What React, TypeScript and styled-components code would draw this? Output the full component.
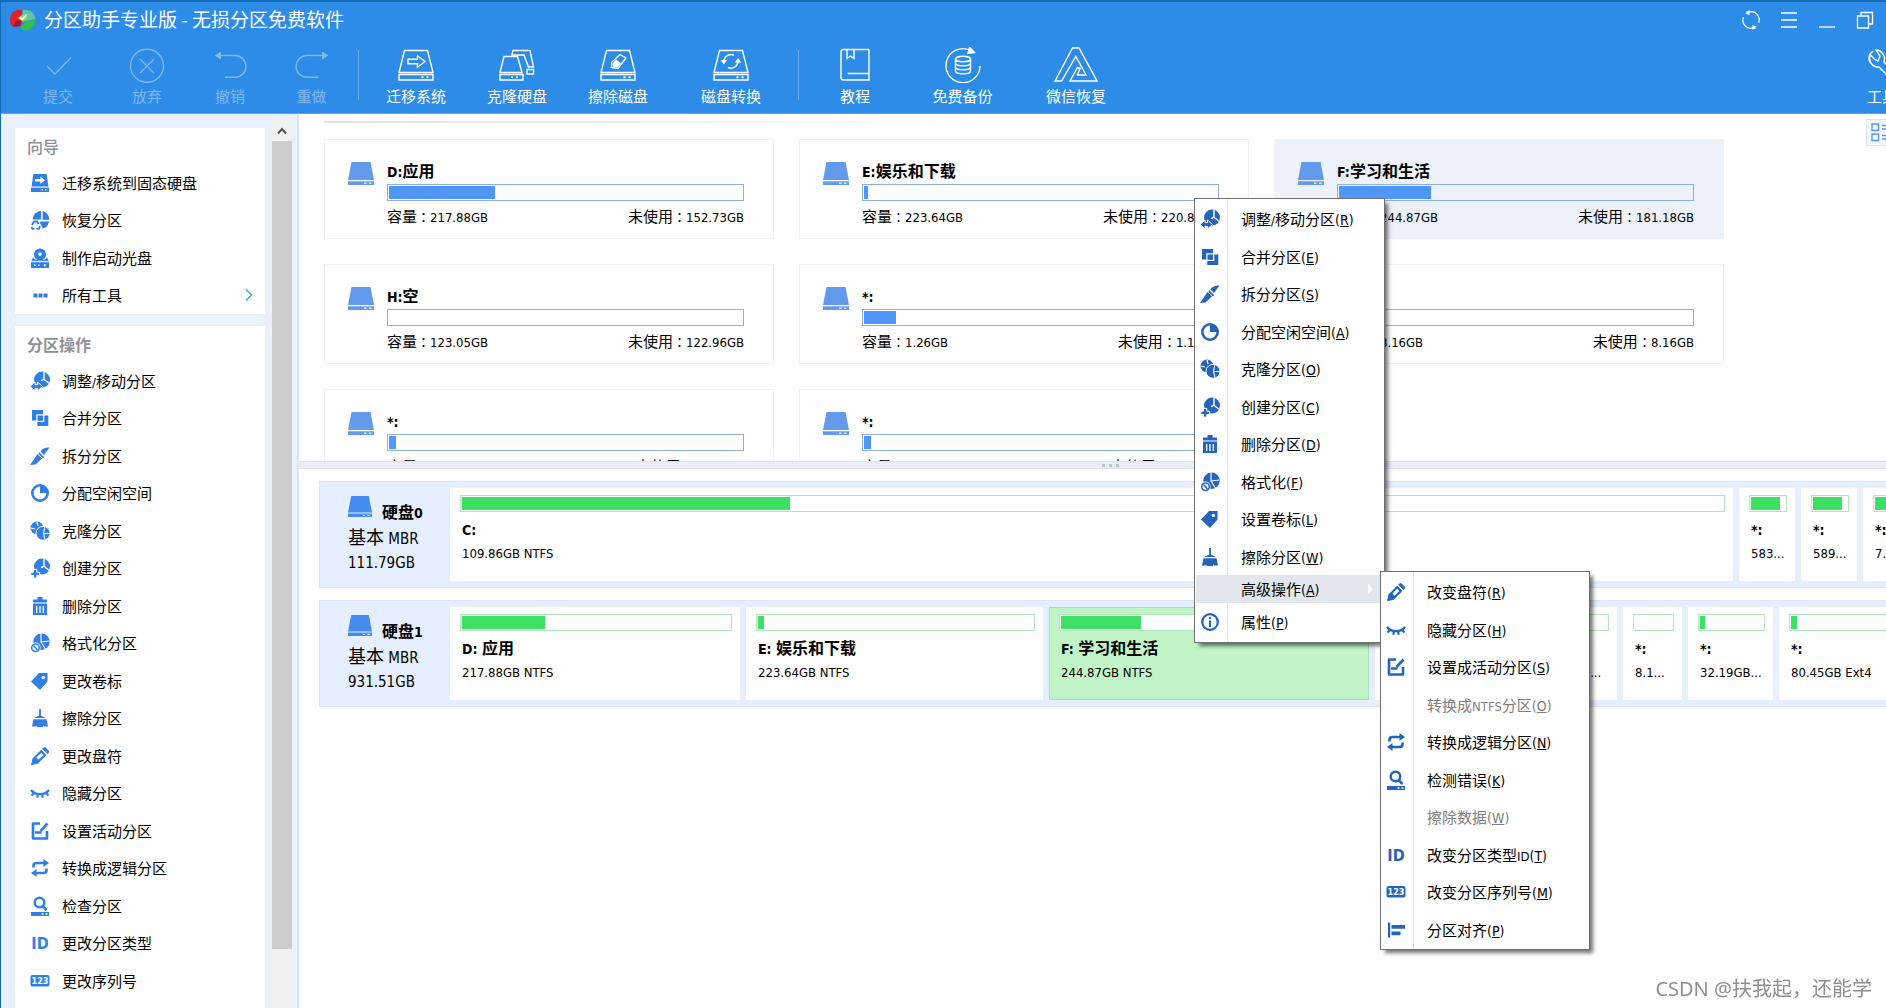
import React from "react";
import styled, { createGlobalStyle, css } from "styled-components";

const cjk = `"Noto Sans CJK SC", sans-serif`;
const latin = `"DejaVu Sans Condensed", "Noto Sans", "Noto Sans CJK TC", sans-serif`;

const GlobalStyle = createGlobalStyle`
  *, *::before, *::after { box-sizing: border-box; }
  html, body { margin: 0; padding: 0; background: #fff; overflow: hidden; }
  body { font-family: ${cjk}; font-size: 15px; color: #000; }
  button { font: inherit; color: inherit; border: 0; padding: 0; margin: 0; background: none; cursor: pointer; text-align: left; }
  svg { display: block; flex: none; }
  ul { list-style: none; margin: 0; padding: 0; }
  h2, h3, p { margin: 0; font-weight: normal; }
`;

/* ---------- text ---------- */

const Latin = styled.span<{ $size: number }>`
  font-family: ${latin};
  font-size: ${(p) => p.$size}px;
  line-height: 0;
`;

function Mixed({ text, size = 13 }: { text: string; size?: number }) {
  return (
    <>
      {text.split(/([\x20-\x7e：]+)/).map((part, i) =>
        i % 2 ? (
          <Latin key={i} $size={size}>
            {part}
          </Latin>
        ) : (
          part
        )
      )}
    </>
  );
}

/* ---------- small icons (20 x 20) ---------- */

const Pie = () => (
  <>
    <circle cx="12" cy="8.6" r="8" fill="currentColor" />
    <path d="M14 1v7.2l-3 1.4M14 8.2l5 4" stroke="#fff" strokeWidth="1.4" fill="none" />
  </>
);

const glyphs: Record<string, React.ReactNode> = {
  migrate: (
    <>
      <path d="M3.4 1h13.2l1.8 12.4H1.6z" fill="currentColor" />
      <path d="M5 6h5.4V3.4L15 7.2l-4.600 3.800V8.400H5z" fill="#fff" />
      <path d="M1 14.600h18v4.400H1z" fill="currentColor" />
      <path d="M11.500 16h1.600v1.600h-1.600zM15 16h1.600v1.600H15z" fill="#fff" />
    </>
  ),
  restore: (
    <>
      <path d="M11 1A8.600 8.600 0 0 0 2.600 9.600h8.400zM12.600 1v8.800h6.600A8.600 8.600 0 0 0 12.600 1zM19 11.400h-8L9.500 12l3.500 6.500a8.600 8.600 0 0 0 6-7.100z" fill="currentColor" />
      <path d="M2 15l2-3.500h3L8.500 14M10 16l-1 2.800H6.500M4.500 18.800H2.400L1.600 17" stroke="currentColor" strokeWidth="1.800" fill="none" />
    </>
  ),
  disc: (
    <>
      <circle cx="10" cy="6.500" r="6" fill="currentColor" />
      <circle cx="10" cy="6" r="1.800" fill="#fff" />
      <path d="M3 9.500L1.300 13h17.400L17 9.500c-2 4-12 4-14 0z" fill="currentColor" />
      <path d="M1 14.200h18V20H1z" fill="currentColor" />
      <path d="M4 16.500h1.500V18H4zM8 16.500h1.500V18H8zM14 16h1.500v2.500H14z" fill="#fff" />
    </>
  ),
  dots: <path d="M3.500 8.500h4v4h-4zM8.500 8.500h4v4h-4zM13.500 8.500h4v4h-4z" fill="currentColor" />,
  resize: (
    <>
      <Pie />
      <path d="M0 15.500l5-4.500v2.600h2.500V11l5 4.500-5 4.500v-2.600H5V20z" fill="currentColor" stroke="#fff" strokeWidth="1" />
    </>
  ),
  merge: (
    <>
      <path d="M2 2h11v4.300H6.300v6.200H2z" fill="currentColor" />
      <path d="M7.300 14v4h11V7.500h-4v6.500z" fill="currentColor" />
      <path d="M7.500 7.500h5.500v5.300H7.500z" fill="currentColor" />
    </>
  ),
  split: (
    <>
      <path d="M19.500 1.500c-5 0-7 1-9 4l3.500 3.500z" fill="currentColor" />
      <path d="M9 6l5.500 5.500-2 .5-4-4z" fill="currentColor" />
      <path d="M7.500 8l4.500 4.500L5.500 18.500l-5.500 0.500z" fill="currentColor" />
    </>
  ),
  allocate: (
    <>
      <circle cx="10" cy="10" r="7.700" fill="none" stroke="currentColor" strokeWidth="2.600" />
      <path d="M10 2.500V10h7.500A7.500 7.500 0 0 0 10 2.500z" fill="currentColor" />
    </>
  ),
  clone: (
    <>
      <circle cx="7" cy="7" r="6.500" fill="currentColor" />
      <path d="M7 1l1 4M1 7l4 1" stroke="#fff" strokeWidth="1.200" />
      <circle cx="13" cy="12.300" r="7" fill="currentColor" stroke="#fff" strokeWidth="1" />
      <path d="M15 5.500l-1.500 6.500 1.500 6.500M13.700 12.500H20" stroke="#fff" strokeWidth="1.100" fill="none" />
    </>
  ),
  create: (
    <>
      <Pie />
      <path d="M3.600 11.400h3.200v2.800h2.800v3.200H6.800v2.800H3.600v-2.800H.8v-3.200h2.800z" fill="currentColor" stroke="#fff" strokeWidth="1" />
    </>
  ),
  trash: (
    <>
      <path d="M3 3.500h4.500V1h5v2.500H17v3H3z" fill="currentColor" />
      <path d="M3 7.500h14V19H3z" fill="currentColor" />
      <path d="M6.700 10v7M10 10v7M13.300 10v7" stroke="#fff" strokeWidth="1.300" />
    </>
  ),
  format: (
    <>
      <circle cx="11.500" cy="8.800" r="8.200" fill="currentColor" />
      <path d="M11 0v9l8.500-1M11 9l5 8" stroke="#fff" strokeWidth="1.100" fill="none" />
      <circle cx="5.500" cy="14.700" r="5.100" fill="#fff" />
      <circle cx="5.500" cy="14.700" r="3.800" fill="none" stroke="currentColor" strokeWidth="1.500" />
      <path d="M3.500 12.500l4 4.500" stroke="currentColor" strokeWidth="1.500" />
    </>
  ),
  tag: (
    <>
      <path d="M1 10.500L9 2h8.500v8.500L10 19z" fill="currentColor" />
      <circle cx="13.300" cy="6.500" r="1.700" fill="#fff" />
    </>
  ),
  broom: (
    <>
      <path d="M9.100 1h1.800v6.500l5 2.500H4l5.100-2.500z" fill="currentColor" />
      <path d="M3.500 11.300h13L18 18.500h-4l-1-1.500v2H7l-1-1.500-.500 1H2z" fill="currentColor" />
    </>
  ),
  pencil: (
    <>
      <path d="M13.500 1.500q1-1 2 0l3.300 3.300q1 1 0 2L17.500 8 12.200 2.800z" fill="currentColor" />
      <path d="M11.200 3.800l5.200 5.200-8.700 8.700L1 19.300l1.500-6.800z" fill="currentColor" />
      <path d="M11.200 6.800l2.100 2.100-4.800 4.800-2.100-2.100z" fill="#fff" />
    </>
  ),
  eye: (
    <path d="M1 7c4 5.500 14 5.500 18 0M4 10l-2.500 2.500M8 11.500l-.800 3.300M12 11.500l.8 3.300M16 10l2.500 2.500" stroke="currentColor" strokeWidth="2.200" fill="none" />
  ),
  active: (
    <>
      <path d="M10 2.500H3v15h14V10" stroke="currentColor" strokeWidth="2.600" fill="none" strokeLinejoin="round" />
      <path d="M17.500 2.500L10.500 10M5 11.500h6.500" stroke="currentColor" strokeWidth="2.600" fill="none" />
    </>
  ),
  loop: (
    <>
      <path d="M3.500 9.500V8q0-3 3-3h8M16.500 10.500V12q0 3-3 3h-8" stroke="currentColor" strokeWidth="2.600" fill="none" />
      <path d="M13.500 1l5.500 4-5.500 4zM6.500 11L1 15l5.500 4z" fill="currentColor" />
    </>
  ),
  inspect: (
    <>
      <circle cx="9.500" cy="6.500" r="4.800" fill="none" stroke="currentColor" strokeWidth="2.400" />
      <path d="M12.500 10l4 4" stroke="currentColor" strokeWidth="2.600" />
      <path d="M1 16h18v4H1z" fill="currentColor" />
      <path d="M11.500 17.300h2v1.400h-2zM15.500 17.300h2v1.400h-2z" fill="#fff" />
    </>
  ),
  id: (
    <text x="10" y="16" textAnchor="middle" fontFamily="DejaVu Sans Condensed, DejaVu Sans" fontWeight="bold" fontSize="16" fill="currentColor">
      ID
    </text>
  ),
  serial: (
    <>
      <rect x="0.500" y="4" width="19" height="11.500" rx="2" fill="currentColor" />
      <text x="10" y="13" textAnchor="middle" fontFamily="DejaVu Sans Condensed, DejaVu Sans" fontWeight="bold" fontSize="9" fill="#fff">
        123
      </text>
    </>
  ),
  align: <path d="M2 2.500h2.200v15H2zM5.500 5H19v3.800H5.500zM5.500 11.500h9v3.800h-9z" fill="currentColor" />,
  info: (
    <>
      <circle cx="10" cy="10" r="7.800" fill="none" stroke="currentColor" strokeWidth="2.200" />
      <path d="M9 5h2v2H9zM9 8.500h2V15H9z" fill="currentColor" />
    </>
  ),
};

const Glyph = ({ name }: { name: string }) => (
  <svg width="20" height="20" viewBox="0 0 20 20" aria-hidden="true">
    {glyphs[name]}
  </svg>
);

/* ---------- toolbar icons (44 x 36) ---------- */

const DriveFrame = () => (
  <>
    <path d="M10.500 3.500h23L39 25.500H5z" />
    <path d="M5 27.500h34V33H5z" />
    <path d="M27.500 30.300h2M32.500 30.300h2" strokeWidth="2" />
  </>
);

const tools: Record<string, React.ReactNode> = {
  check: <path d="M11 19l8 8L35 10.500" />,
  discard: (
    <>
      <circle cx="22" cy="18.800" r="16.500" />
      <path d="M15 12l14 14M29 12L15 26" />
    </>
  ),
  undo: (
    <>
      <path d="M12 8.500h15a10.900 10.900 0 0 1 0 21.800H17" />
      <path d="M6.500 8.500l6.500-4v8z" fill="currentColor" stroke="none" />
    </>
  ),
  redo: (
    <>
      <path d="M32 8.500H17a10.900 10.900 0 0 0 0 21.800h11" />
      <path d="M38.500 8.500l-6.500-4v8z" fill="currentColor" stroke="none" />
    </>
  ),
  migrate: (
    <>
      <DriveFrame />
      <path d="M14 12.300h9.500V8.800l7.500 5.700-7.500 5.700v-3.500H14z" />
    </>
  ),
  clone: (
    <>
      <path d="M9 9.500h13.500L27 25.500H5zM5 27.500h23V33H5zM16 30.300h2M21 30.300h2" />
      <path d="M17 8l1-4.500h17L38.500 20h-5L29 8zM32 22.500h6.500v4.500H32z" />
    </>
  ),
  erase: (
    <>
      <DriveFrame />
      <path d="M24 7.500l6 3.500-8 10.500-6.500-1 .5-5.500z" />
      <path d="M20 12.500l5 3.800-3.500 4.200-4.500-.5v-4z" fill="currentColor" stroke="none" />
    </>
  ),
  convert: (
    <>
      <DriveFrame />
      <path d="M15 14a7 7 0 0 1 10-5.800M29 14.500a7 7 0 0 1-10 6" />
      <path d="M11.500 13h6.500l-3.200 4.500zM25.800 15.500h6.500L29 11z" fill="currentColor" stroke="none" />
    </>
  ),
  book: (
    <>
      <path d="M36 2.500H10.500q-2.500 0-2.500 2.500v25.500q0 2.500 2.500 2.500H36v-6.500H14.500M36 2.500v24" />
      <path d="M14 2.500v9l3.500-2.500 3.500 2.500v-9" />
    </>
  ),
  backup: (
    <>
      <path d="M29 3.200A17 17 0 1 0 39 19" />
      <path d="M28.500 0l5 5.500-6.500 1z" fill="currentColor" />
      <ellipse cx="22" cy="12" rx="7.500" ry="2.800" />
      <path d="M14.500 12v12c0 3.800 15 3.800 15 0V12M14.500 16c0 3.800 15 3.800 15 0M14.500 20c0 3.800 15 3.800 15 0" />
    </>
  ),
  wechat: (
    <path d="M18.500 1h6.500L43 34H16l7.500-13.500 2.500 1-2.500 6.500h8.500L21.800 9.500 7.500 34H1z" />
  ),
  wrench: (
    <path d="M13 4a9 9 0 0 0 6 16l13 13q3 2 5 0t0-5L24 15a9 9 0 0 0-8-12l4 6-2 5-4-2-4-5a9 9 0 0 0 8 13" />
  ),
};

const ToolGlyph = ({ name }: { name: string }) => (
  <svg width="44" height="36" viewBox="0 0 44 36" fill="none" stroke="currentColor" strokeWidth="1.400" aria-hidden="true">
    {tools[name]}
  </svg>
);

const Drive = ({ color, width, height }: { color: string; width: number; height: number }) => (
  <svg width={width} height={height} viewBox="0 0 26 23" preserveAspectRatio="none" aria-hidden="true">
    <path d="M3.500 0h19L26 18H0zM0 19.200h26V23H0z" fill={color} />
    <path d="M16 20.500h2.500v1.500H16zM21 20.500h2.500v1.500H21z" fill="#dfeaff" />
  </svg>
);

const Logo = () => (
  <svg width="26" height="22" viewBox="0 0 26 22" aria-hidden="true">
    <path d="M12 1C4 0 0 5 0 11c0 3 1 5 3 7l9-8z" fill="#e1222b" />
    <path d="M3 18l3-6 6-2-1 7z" fill="#a81522" />
    <path d="M13 1c7-1 12 4 12.500 9L17 12l-5-2z" fill="#5fc7a6" />
    <path d="M25.500 11c0 6-5 10.500-11 10.500-2 0-4-2-4-4l6-5z" fill="#2fc14a" />
    <path d="M8 9l4.500-3.500L18 8l-4 5z" fill="#8ad94b" />
    <path d="M9.500 8.500l2.500 2 4.500-5" stroke="#fff" strokeWidth="1.800" fill="none" />
  </svg>
);

/* ---------- window frame ---------- */

const Viewport = styled.div`
  height: 100vh;
  overflow: hidden;
`;

/* The window is a little wider than the visible desktop area. */
const Window = styled.div`
  position: relative;
  display: flex;
  flex-direction: column;
  width: calc(100% + 36px);
  height: 100%;
`;

const Header = styled.header`
  flex: none;
  color: #fff;
  background: #2d8ce8;
  border-top: 2px solid #126bb5;
  border-left: 1px solid #126bb5;
  border-bottom: 1px solid #5ba5ee;
`;

const TitleBar = styled.div`
  display: flex;
  align-items: center;
  height: 36px;
  padding-left: 9px;
`;

const Title = styled.h1`
  flex: 1;
  margin: 0 0 2px 8px;
  font-size: 19px;
  line-height: 24px;
  font-weight: normal;
  white-space: nowrap;
`;

const WindowButton = styled.button`
  display: grid;
  place-items: center;
  width: 38px;
  height: 32px;
`;

const Toolbar = styled.nav`
  display: flex;
  align-items: flex-start;
  height: 75px;
  padding: 9px 0 0 12px;
`;

const ToolButton = styled.button<{ $width: number }>`
  display: flex;
  flex-direction: column;
  align-items: center;
  gap: 3px;
  width: ${(p) => p.$width}px;
  flex: none;
  line-height: 20px;
  white-space: nowrap;
  &:disabled {
    color: #7fb8f2;
    cursor: default;
  }
`;

const ToolDivider = styled.span`
  flex: none;
  width: 1px;
  height: 50px;
  margin: 3px 7px 0 4px;
  background: #6db0f1;
`;

const Spacer = styled.span`
  flex: 1;
`;

const Body = styled.div`
  display: flex;
  flex: 1;
  min-height: 0;
`;

/* ---------- sidebar ---------- */

const Sidebar = styled.aside`
  display: flex;
  flex: none;
  gap: 7px;
  width: 299px;
  padding: 0 5px 0 14px;
  background: #eaf1fe;
  border-left: 1px solid #126bc0;
  border-right: 2px solid #dde5f3;
  overflow: hidden;
`;

const Panels = styled.div`
  display: flex;
  flex-direction: column;
  gap: 12px;
  width: 250px;
  padding-top: 14px;
`;

const Panel = styled.section<{ $fill?: boolean }>`
  background: #fff;
  flex: ${(p) => (p.$fill ? "1 0 auto" : "none")};
`;

const PanelTitle = styled.h2<{ $bold?: boolean }>`
  padding: 0 12px;
  font-size: 16px;
  line-height: 36px;
  font-weight: ${(p) => (p.$bold ? "bold" : 500)};
  color: #8e9196;
`;

const SideRow = styled.li`
  height: 37px;
  &:nth-child(even) {
    height: 38px;
  }
`;

const SideButton = styled.button`
  display: flex;
  align-items: center;
  gap: 12px;
  width: 100%;
  height: 100%;
  padding: 0 11px 0 15px;
  line-height: 22px;
  white-space: nowrap;
  svg {
    color: #2f7fe6;
  }
`;

const SideLabel = styled.span`
  flex: 1;
`;

const Scrollbar = styled.div`
  display: flex;
  flex-direction: column;
  width: 20px;
  margin-top: 6px;
  background: #f0f0f0;
`;

const ScrollButton = styled.button`
  display: grid;
  place-items: center;
  height: 21px;
`;

const ScrollThumb = styled.div`
  flex: 0 0 91%;
  background: #cdcdcd;
`;

/* ---------- main area ---------- */

const Main = styled.main`
  display: flex;
  flex-direction: column;
  flex: 1;
  min-width: 0;
  background: #fff;
`;

const CardArea = styled.section`
  flex: none;
  height: 347px;
  padding: 5px 0 0 25px;
  overflow: hidden;
`;

const CardHeader = styled.div`
  display: flex;
  justify-content: space-between;
  height: 20px;
`;

const HeaderRule = styled.div`
  width: 645px;
  height: 2px;
  margin-top: 2px;
  background: linear-gradient(90deg, #dfe4ec, #eceff4 50%, #fff);
`;

const ViewButton = styled.button`
  display: grid;
  place-items: center;
  width: 56px;
  height: 27px;
  background: #f3f7fe;
  border: 1px solid #dde4ef;
`;

const CardGrid = styled.div`
  display: grid;
  grid-template-columns: repeat(auto-fill, 450px);
  gap: 25px;
`;

const Card = styled.article<{ $selected?: boolean }>`
  display: flex;
  gap: 13px;
  height: 100px;
  padding: 18px 29px 0 23px;
  border: 1px solid ${(p) => (p.$selected ? "#edf2fa" : "#f1f2f5")};
  background: ${(p) => (p.$selected ? "#edf2fa" : "#fff")};
  svg {
    margin-top: 4px;
  }
`;

const CardBody = styled.div`
  flex: 1;
  min-width: 0;
`;

const VolumeName = styled.h3`
  font-size: 16px;
  line-height: 24px;
  font-weight: bold;
  white-space: nowrap;
`;

const CardName = styled(VolumeName)`
  margin-bottom: 2px;
`;

const Track = styled.div<{ $tone: "blue" | "green" }>`
  height: 17px;
  padding: 1px;
  border: 1px solid;
  ${(p) =>
    p.$tone === "blue"
      ? css`
          border-color: #8db0e2;
          background: transparent;
        `
      : css`
          border-color: #b4e6bd;
          background: #fff;
        `}
`;

const Fill = styled.div<{ $tone: "blue" | "green" }>`
  height: 100%;
  background: ${(p) => (p.$tone === "blue" ? "#4f97ff" : "#3de064")};
`;

const Usage = styled.div`
  display: flex;
  justify-content: space-between;
  margin-top: 4px;
  line-height: 22px;
  white-space: nowrap;
`;

const Splitter = styled.div`
  display: flex;
  flex: none;
  align-items: center;
  justify-content: center;
  gap: 4px;
  height: 8px;
  background: #e9eef6;
  border-top: 1px solid #dde3ec;
  border-bottom: 1px solid #dde3ec;
`;

const Grip = styled.span`
  width: 3px;
  height: 3px;
  background: #bcc6d6;
`;

const DiskArea = styled.section`
  display: flex;
  flex-direction: column;
  gap: 12px;
  padding: 12px 0 0 20px;
`;

const Disk = styled.article`
  display: grid;
  grid-template-columns: 130px minmax(0, 1fr);
  height: 107px;
  padding: 6px 6px 6px 0;
  background: #e5efff;
  border: 1px solid #d9e5f5;
`;

const DiskInfo = styled.div`
  padding: 8px 0 0 28px;
  font-size: 18px;
  line-height: 24px;
  white-space: nowrap;
`;

const DiskHead = styled.div`
  display: flex;
  gap: 10px;
  height: 24px;
  margin-bottom: 4px;
`;

const DiskName = styled.h3`
  align-self: flex-end;
  font-size: 16px;
  line-height: 18px;
  font-weight: bold;
`;

const Partitions = styled.div<{ $columns: string }>`
  display: grid;
  grid-template-columns: ${(p) => p.$columns};
  gap: 6px;
`;

const Partition = styled.div<{ $selected?: boolean }>`
  min-width: 0;
  padding: 7px 8px 0 10px;
  background: ${(p) => (p.$selected ? "#c1f5c8" : "#fff")};
  box-shadow: ${(p) => (p.$selected ? "inset 0 0 0 1px #a6dfb2" : "none")};
  overflow: hidden;
`;

const PartitionName = styled(VolumeName)`
  padding-left: 2px;
  margin-top: 4px;
`;

const PartitionSize = styled.p`
  padding-left: 2px;
  margin-top: 4px;
  font-family: ${latin};
  font-size: 13px;
  line-height: 20px;
  white-space: nowrap;
`;

/* ---------- menus ---------- */

const MenuBox = styled.ul<{ $width: number }>`
  position: absolute;
  width: ${(p) => p.$width}px;
  padding: 1px;
  border: 1px solid #707070;
  background: linear-gradient(90deg, #fff 32px, #e1e6ee 32px, #e1e6ee 33px, #fff 33px);
  box-shadow: 4px 4px 4px -1px rgba(0, 0, 0, 0.55);
`;

const ContextMenu = styled(MenuBox)`
  top: 198px;
  left: 1194px;
  padding: 1px 1px 2px;
  z-index: 2;
`;

const SubMenu = styled(MenuBox)`
  top: -4px;
  left: 184px;
`;

const MenuRow = styled.li`
  position: relative;
  height: 38px;
  &:nth-child(even) {
    height: 37px;
  }
`;

const OpenRow = styled.li`
  position: relative;
  height: 28px;
  background: #e2e7ee;
`;

const MenuButton = styled.button`
  display: grid;
  grid-template-columns: 20px 1fr auto;
  align-items: center;
  gap: 21px;
  width: 100%;
  height: 100%;
  padding: 0 10px 0 4px;
  line-height: 22px;
  white-space: nowrap;
  svg {
    color: #2464bb;
  }
  &:disabled {
    color: #808080;
    cursor: default;
  }
`;

const Arrow = styled.span`
  border: 5px solid transparent;
  border-left-color: #fff;
  border-right-width: 0;
`;

const Watermark = styled.p`
  position: fixed;
  right: 14px;
  bottom: 5px;
  font-family: "Noto Sans", ${cjk};
  font-size: 20px;
  line-height: 28px;
  color: #8f8f8f;
`;

/* ---------- data ---------- */

type Tool = [icon: string, label: string, width: number];

const history: Tool[] = [
  ["check", "提交", 90],
  ["discard", "放弃", 88],
  ["undo", "撤销", 78],
  ["redo", "重做", 85],
];
const diskTools: Tool[] = [
  ["migrate", "迁移系统", 100],
  ["clone", "克隆硬盘", 102],
  ["erase", "擦除磁盘", 100],
  ["convert", "磁盘转换", 126],
];
const extras: Tool[] = [
  ["book", "教程", 98],
  ["backup", "免费备份", 117],
  ["wechat", "微信恢复", 110],
];

const wizards: [string, string][] = [
  ["migrate", "迁移系统到固态硬盘"],
  ["restore", "恢复分区"],
  ["disc", "制作启动光盘"],
  ["dots", "所有工具"],
];

const operations: [string, string][] = [
  ["resize", "调整/移动分区"],
  ["merge", "合并分区"],
  ["split", "拆分分区"],
  ["allocate", "分配空闲空间"],
  ["clone", "克隆分区"],
  ["create", "创建分区"],
  ["trash", "删除分区"],
  ["format", "格式化分区"],
  ["tag", "更改卷标"],
  ["broom", "擦除分区"],
  ["pencil", "更改盘符"],
  ["eye", "隐藏分区"],
  ["active", "设置活动分区"],
  ["loop", "转换成逻辑分区"],
  ["inspect", "检查分区"],
  ["id", "更改分区类型"],
  ["serial", "更改序列号"],
];

const volumes = [
  { name: "D:应用", size: "217.88GB", free: "152.73GB", used: 30 },
  { name: "E:娱乐和下载", size: "223.64GB", free: "220.86GB", used: 1 },
  { name: "F:学习和生活", size: "244.87GB", free: "181.18GB", used: 26, selected: true },
  { name: "H:空", size: "123.05GB", free: "122.96GB", used: 0 },
  { name: "*:", size: "1.26GB", free: "1.15GB", used: 9 },
  { name: "*:", size: "8.16GB", free: "8.16GB", used: 0 },
  { name: "*:", size: "32.19GB", free: "31.54GB", used: 2 },
  { name: "*:", size: "80.45GB", free: "79.02GB", used: 2 },
];

const disks = [
  {
    name: "硬盘0",
    size: "111.79GB",
    parts: [
      { name: "C:", size: "109.86GB NTFS", used: 26, width: 1283 },
      { name: "*:", size: "583...", used: 86, width: 56 },
      { name: "*:", size: "589...", used: 86, width: 56 },
      { name: "*:", size: "7.0...", used: 86, width: 52 },
    ],
  },
  {
    name: "硬盘1",
    size: "931.51GB",
    parts: [
      { name: "D: 应用", size: "217.88GB NTFS", used: 31, width: 290 },
      { name: "E: 娱乐和下载", size: "223.64GB NTFS", used: 2, width: 297 },
      { name: "F: 学习和生活", size: "244.87GB NTFS", used: 27, width: 320, selected: true },
      { name: "H: 空", size: "123.05GB NTFS", used: 0, width: 186 },
      { name: "*:", size: "1....", used: 0, width: 50 },
      { name: "*:", size: "8.1...", used: 0, width: 59 },
      { name: "*:", size: "32.19GB...", used: 8, width: 85 },
      { name: "*:", size: "80.45GB Ext4", used: 5, width: 136 },
    ],
  },
];

type Entry = [icon: string | null, label: string, key: string];

const partitionMenu: Entry[] = [
  ["resize", "调整/移动分区", "R"],
  ["merge", "合并分区", "E"],
  ["split", "拆分分区", "S"],
  ["allocate", "分配空闲空间", "A"],
  ["clone", "克隆分区", "O"],
  ["create", "创建分区", "C"],
  ["trash", "删除分区", "D"],
  ["format", "格式化", "F"],
  ["tag", "设置卷标", "L"],
  ["broom", "擦除分区", "W"],
];

const advancedMenu: Entry[] = [
  ["pencil", "改变盘符", "R"],
  ["eye", "隐藏分区", "H"],
  ["active", "设置成活动分区", "S"],
  [null, "转换成NTFS分区", "O"],
  ["loop", "转换成逻辑分区", "N"],
  ["inspect", "检测错误", "K"],
  [null, "擦除数据", "W"],
  ["id", "改变分区类型ID", "T"],
  ["serial", "改变分区序列号", "M"],
  ["align", "分区对齐", "P"],
];

/* ---------- parts ---------- */

const ToolGroup = ({ items, disabled }: { items: Tool[]; disabled?: boolean }) => (
  <>
    {items.map(([icon, label, width]) => (
      <ToolButton key={label} $width={width} disabled={disabled}>
        <ToolGlyph name={icon} />
        {label}
      </ToolButton>
    ))}
  </>
);

const Accel = ({ label, keyName }: { label: string; keyName: string }) => (
  <span>
    <Mixed text={label} />
    <Latin $size={14}>
      (<u>{keyName}</u>)
    </Latin>
  </span>
);

const MenuEntry = ({ entry: [icon, label, keyName] }: { entry: Entry }) => (
  <MenuRow role="none">
    <MenuButton role="menuitem" disabled={icon === null}>
      {icon ? <Glyph name={icon} /> : <span />}
      <Accel label={label} keyName={keyName} />
    </MenuButton>
  </MenuRow>
);

const Meter = ({ tone, used }: { tone: "blue" | "green"; used: number }) => (
  <Track $tone={tone}>
    <Fill $tone={tone} style={{ width: `${used}%` }} />
  </Track>
);

const SideList = ({ items }: { items: [string, string][] }) => (
  <ul>
    {items.map(([icon, label]) => (
      <SideRow key={label}>
        <SideButton>
          <Glyph name={icon} />
          <SideLabel>
            <Mixed text={label} />
          </SideLabel>
          {icon === "dots" && (
            <svg width="10" height="14" viewBox="0 0 10 14" aria-hidden="true">
              <path d="M2 1.500L7.500 7 2 12.500" fill="none" stroke="#4ea0f2" strokeWidth="1.600" />
            </svg>
          )}
        </SideButton>
      </SideRow>
    ))}
  </ul>
);

export default function App() {
  return (
    <Viewport>
      <GlobalStyle />
      <Window>
        <Header>
          <TitleBar>
            <Logo />
            <Title>分区助手专业版 - 无损分区免费软件</Title>
            <WindowButton aria-label="刷新">
              <svg width="20" height="20" viewBox="0 0 20 20" fill="none" stroke="#fff" strokeWidth="1.200">
                <path d="M5.500 1.800H9a8 8 0 0 1 8.500 11M14.500 18.200H11a8 8 0 0 1-8.500-11" />
                <path d="M4.500 3.500l4-3.500v5zM15.500 16.500l-4 3.500v-5z" fill="#fff" stroke="none" />
              </svg>
            </WindowButton>
            <WindowButton aria-label="菜单">
              <svg width="18" height="18" viewBox="0 0 18 18" stroke="#fff" strokeWidth="1.300">
                <path d="M1 2h16M1 9h16M1 16h16" />
              </svg>
            </WindowButton>
            <WindowButton aria-label="最小化">
              <svg width="18" height="18" viewBox="0 0 18 18" stroke="#fff" strokeWidth="1.300">
                <path d="M1 16h16" />
              </svg>
            </WindowButton>
            <WindowButton aria-label="还原">
              <svg width="18" height="18" viewBox="0 0 18 18" fill="none" stroke="#fff" strokeWidth="1.300">
                <path d="M1.500 5h11v12h-11zM5 5V1.500h11.500v11.500h-4" />
              </svg>
            </WindowButton>
            <WindowButton aria-label="关闭">
              <svg width="18" height="18" viewBox="0 0 18 18" stroke="#fff" strokeWidth="1.300">
                <path d="M2 2l14 14M16 2L2 16" />
              </svg>
            </WindowButton>
          </TitleBar>
          <Toolbar>
            <ToolGroup items={history} disabled />
            <ToolDivider />
            <ToolGroup items={diskTools} />
            <ToolDivider />
            <ToolGroup items={extras} />
            <Spacer />
            <ToolGroup items={[["wrench", "工具", 80]]} />
          </Toolbar>
        </Header>

        <Body>
          <Sidebar>
            <Panels>
              <Panel>
                <PanelTitle>向导</PanelTitle>
                <SideList items={wizards} />
              </Panel>
              <Panel $fill>
                <PanelTitle $bold>分区操作</PanelTitle>
                <SideList items={operations} />
              </Panel>
            </Panels>
            <Scrollbar>
              <ScrollButton aria-label="向上滚动">
                <svg width="10" height="8" viewBox="0 0 10 8">
                  <path d="M1 6.500l4-4.500 4 4.500" fill="none" stroke="#505050" strokeWidth="2" />
                </svg>
              </ScrollButton>
              <ScrollThumb />
            </Scrollbar>
          </Sidebar>

          <Main>
            <CardArea>
              <CardHeader>
                <HeaderRule />
                <ViewButton aria-label="切换视图">
                  <svg width="46" height="19" viewBox="0 0 46 19" fill="none" stroke="#5b97ea" strokeWidth="1.400">
                    <path d="M1 1h6.500v6.500H1zM1 11h6.500v6.500H1zM11 2.500h8M11 6h8M11 12.500h8M11 16h8M27 6l5 6 5-6" />
                  </svg>
                </ViewButton>
              </CardHeader>
              <CardGrid>
                {volumes.map((v, i) => (
                  <Card key={i} $selected={v.selected}>
                    <Drive color="#649aeb" width={26} height={23} />
                    <CardBody>
                      <CardName>
                        <Mixed text={v.name} size={14} />
                      </CardName>
                      <Meter tone="blue" used={v.used} />
                      <Usage>
                        <span>
                          <Mixed text={`容量：${v.size}`} />
                        </span>
                        <span>
                          <Mixed text={`未使用：${v.free}`} />
                        </span>
                      </Usage>
                    </CardBody>
                  </Card>
                ))}
              </CardGrid>
            </CardArea>

            <Splitter>
              <Grip />
              <Grip />
              <Grip />
            </Splitter>

            <DiskArea>
              {disks.map((d) => (
                <Disk key={d.name}>
                  <DiskInfo>
                    <DiskHead>
                      <Drive color="#458cf0" width={24} height={21} />
                      <DiskName>
                        <Mixed text={d.name} size={14} />
                      </DiskName>
                    </DiskHead>
                    <p>
                      <Mixed text="基本 MBR" size={15} />
                    </p>
                    <p>
                      <Mixed text={d.size} size={15} />
                    </p>
                  </DiskInfo>
                  <Partitions $columns={d.parts.map((p) => `minmax(0, ${p.width}fr)`).join(" ")}>
                    {d.parts.map((p, i) => (
                      <Partition key={i} $selected={p.selected}>
                        <Meter tone="green" used={p.used} />
                        <PartitionName>
                          <Mixed text={p.name} size={14} />
                        </PartitionName>
                        <PartitionSize>{p.size}</PartitionSize>
                      </Partition>
                    ))}
                  </Partitions>
                </Disk>
              ))}
            </DiskArea>
          </Main>
        </Body>

        <ContextMenu $width={191} role="menu">
          {partitionMenu.map((e) => (
            <MenuEntry key={e[1]} entry={e} />
          ))}
          <OpenRow role="none">
            <MenuButton role="menuitem" aria-haspopup="menu" aria-expanded="true">
              <span />
              <Accel label="高级操作" keyName="A" />
              <Arrow />
            </MenuButton>
            <SubMenu $width={210} role="menu">
              {advancedMenu.map((e) => (
                <MenuEntry key={e[1]} entry={e} />
              ))}
            </SubMenu>
          </OpenRow>
          <MenuEntry entry={["info", "属性", "P"]} />
        </ContextMenu>
      </Window>
      <Watermark>CSDN @扶我起，还能学</Watermark>
    </Viewport>
  );
}
